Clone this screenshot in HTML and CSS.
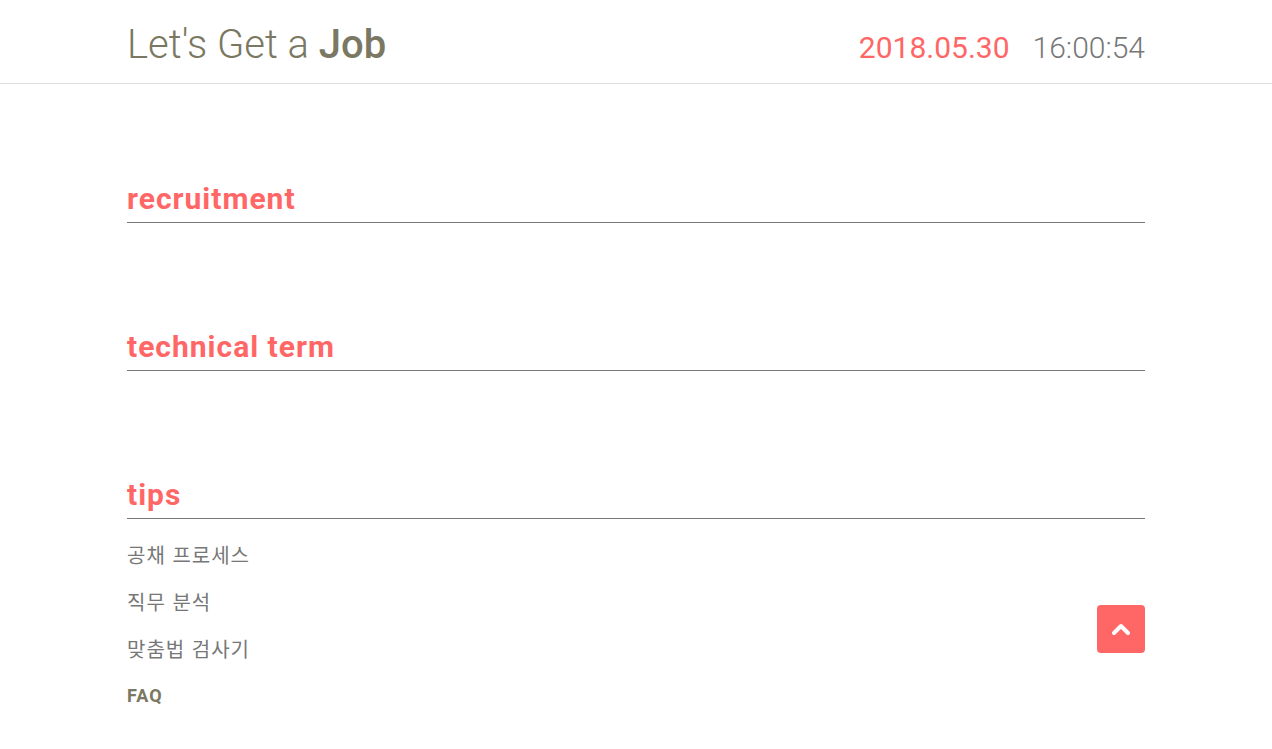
FILE: index.html
```html
<!DOCTYPE html>
<html lang="ko">
<head>
<meta charset="utf-8">
<title>Let's Get a Job</title>
<link rel="stylesheet" href="styles.css">
</head>
<body>
<header class="site-header">
  <div class="container header-inner">
    <h1 class="logo">Let's Get a <strong>Job</strong></h1>
    <div class="clock">
      <span class="date">2018.05.30</span>
      <span class="time">16:00:54</span>
    </div>
  </div>
</header>
<main class="container content">
  <section class="section">
    <h2 class="section-title">recruitment</h2>
  </section>
  <section class="section">
    <h2 class="section-title">technical term</h2>
  </section>
  <section class="section">
    <h2 class="section-title">tips</h2>
    <ul class="tip-list">
      <li><a href="#">공채 프로세스</a></li>
      <li><a href="#">직무 분석</a></li>
      <li><a href="#">맞춤법 검사기</a></li>
      <li><a href="#" class="faq">FAQ</a></li>
    </ul>
  </section>
</main>
<a href="#" class="to-top" aria-label="top">
  <svg width="20" height="14" viewBox="0 0 20 14"><path d="M3 11 L10 4 L17 11" fill="none" stroke="#fff" stroke-width="4" stroke-linecap="round" stroke-linejoin="round"/></svg>
</a>
</body>
</html>
```
FILE: styles.css
```css
* { box-sizing: border-box; }
html, body { margin: 0; padding: 0; background: #fff; }
body {
  font-family: Roboto, "Noto Sans CJK KR", sans-serif;
  color: #777;
}
.container {
  width: 1018px;
  margin: 0 auto;
}
.site-header {
  height: 84px;
  border-bottom: 1px solid #dddddd;
}
.header-inner {
  height: 83px;
  display: flex;
  align-items: center;
  justify-content: space-between;
}
.logo {
  margin: 0;
  font-size: 40px;
  font-weight: 300;
  color: #7a7862;
  line-height: 1;
  padding-top: 6px;
}
.logo strong { font-weight: 500; }
.clock {
  display: flex;
  align-items: baseline;
  gap: 23px;
  font-size: 30px;
  font-weight: 300;
  line-height: 1;
  padding-top: 12px;
}
.date { color: #ff6666; font-weight: 400; }
.time { color: #777; }
.content { letter-spacing: 1px; }
.section {
  padding-top: 99px;
}
.section + .section { padding-top: 108px; }
.section-title {
  margin: 0;
  font-size: 30px;
  font-weight: 700;
  color: #ff6666;
  line-height: 32px;
  padding-bottom: 7px;
  border-bottom: 1px solid #777;
}
.tip-list {
  list-style: none;
  margin: 0;
  padding: 12px 0 0;
}
.tip-list li {
  height: 47px;
  display: flex;
  align-items: center;
}
.tip-list a {
  color: #777;
  text-decoration: none;
  font-size: 20px;
  font-family: "Noto Sans CJK KR", Roboto, sans-serif;
}
.tip-list a.faq {
  font-family: Roboto, sans-serif;
  font-weight: 700;
  font-size: 18px;
  color: #7a7862;
}
.to-top {
  position: fixed;
  left: 1097px;
  top: 605px;
  width: 48px;
  height: 48px;
  border-radius: 4px;
  background: #ff6666;
  display: flex;
  align-items: center;
  justify-content: center;
}
```
